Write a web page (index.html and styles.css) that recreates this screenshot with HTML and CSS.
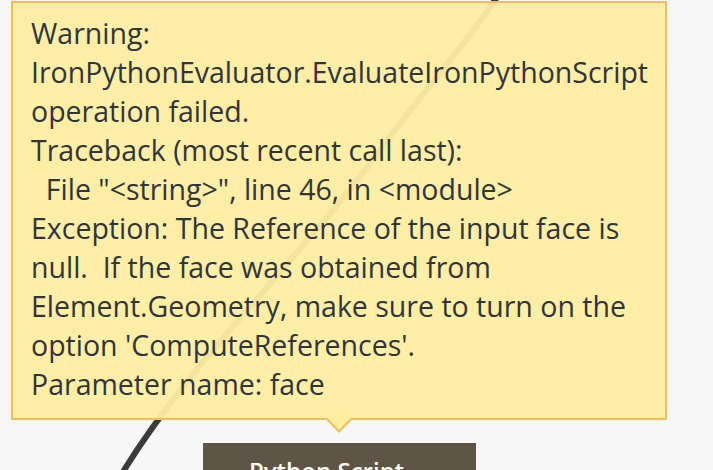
FILE: index.html
```html
<!DOCTYPE html>
<html>
<head>
<meta charset="utf-8">
<link rel="stylesheet" href="styles.css">
</head>
<body>
<div class="canvas">
  <svg class="wire" width="713" height="470" viewBox="0 0 713 470">
    <path d="M503 -12 C 470 40, 420 95, 380 150 C 300 260, 190 360, 118 480" fill="none" stroke="#3b3b3b" stroke-width="6"/>
  </svg>
  <div class="tooltip">
    <div class="msg">Warning:<br>IronPythonEvaluator.EvaluateIronPythonScript<br>operation failed.<br>Traceback (most recent call last):<br>&nbsp;&nbsp;File "&lt;string&gt;", line 46, in &lt;module&gt;<br>Exception: The Reference of the input face is<br>null.&nbsp; If the face was obtained from<br>Element.Geometry, make sure to turn on the<br>option 'ComputeReferences'.<br>Parameter name: face</div>
    <span class="pointer"></span>
  </div>
  <div class="node">
    <div class="node-title">Python Script</div>
  </div>
</div>
</body>
</html>
```
FILE: styles.css
```css
html, body {
  margin: 0;
  padding: 0;
}
body {
  background: #f7f7f7;
  width: 713px;
  height: 470px;
  overflow: hidden;
}
.canvas {
  position: relative;
  width: 713px;
  height: 470px;
  padding-top: 1px;
  box-sizing: border-box;
  overflow: hidden;
}
.wire {
  position: absolute;
  left: 0;
  top: 0;
}
.tooltip {
  position: relative;
  margin-left: 11px;
  width: 656px;
  height: 419px;
  box-sizing: border-box;
  background: rgba(255, 237, 160, 0.95);
  border: 2px solid #f1be5c;
  padding: 11px 0 0 18px;
}
.msg {
  font-family: "Open Sans", sans-serif;
  font-size: 28.5px;
  line-height: 39px;
  color: #30353c;
  white-space: nowrap;
}
.pointer {
  position: absolute;
  left: 317px;
  bottom: -11px;
  width: 18px;
  height: 18px;
  background: #ffeda0;
  border-right: 2px solid #f1be5c;
  border-bottom: 2px solid #f1be5c;
  transform: rotate(45deg);
  box-sizing: border-box;
}
.node {
  position: relative;
  margin-left: 203px;
  margin-top: 23px;
  width: 273px;
  height: 60px;
  background: #5e5546;
}
.node-title {
  font-family: "Open Sans", sans-serif;
  font-weight: 600;
  font-size: 24px;
  color: #ffffff;
  padding: 11px 0 0 46px;
  line-height: 34px;
}
```
